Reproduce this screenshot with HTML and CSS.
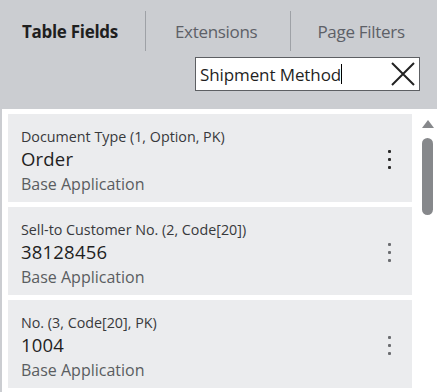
FILE: index.html
```html
<!DOCTYPE html>
<html lang="en">
<head>
  <meta charset="UTF-8" />
  <title>Table Fields</title>
  <link rel="stylesheet" href="styles.css">
</head>
<body>
  <div class="panel">
    <div class="header">
      <div class="tabs">
        <div class="tab active">Table Fields</div>
        <div class="sep first"></div>
        <div class="tab">Extensions</div>
        <div class="sep second"></div>
        <div class="tab">Page Filters</div>
      </div>
      <div class="search-row">
        <div class="search">
          <span class="search-text">Shipment Method</span><span class="caret"></span>
          <svg class="clear" width="26" height="26" viewBox="0 0 26 26">
            <path d="M2 2 L24 24 M24 2 L2 24" stroke="#222" stroke-width="2" fill="none"/>
          </svg>
        </div>
      </div>
    </div>

    <div class="list">
      <div class="cards">
        <div class="card">
          <div class="info">
            <div class="meta">Document Type (1, Option, PK)</div>
            <div class="value">Order</div>
            <div class="source">Base Application</div>
          </div>
          <div class="more dark"><i></i><i></i><i></i></div>
        </div>
        <div class="card">
          <div class="info">
            <div class="meta">Sell-to Customer No. (2, Code[20])</div>
            <div class="value">38128456</div>
            <div class="source">Base Application</div>
          </div>
          <div class="more"><i></i><i></i><i></i></div>
        </div>
        <div class="card">
          <div class="info">
            <div class="meta">No. (3, Code[20], PK)</div>
            <div class="value">1004</div>
            <div class="source">Base Application</div>
          </div>
          <div class="more"><i></i><i></i><i></i></div>
        </div>
      </div>
      <div class="scrollbar">
        <div class="arrow"></div>
        <div class="thumb"></div>
      </div>
    </div>
  </div>
</body>
</html>
```

FILE: styles.css
```css
body {
  margin: 0;
  padding: 0;
  font-family: 'Open Sans', 'Noto Sans', sans-serif;
  background: #cbcdd1;
  overflow: hidden;
}

.panel {
  width: 437px;
  height: 392px;
  display: flex;
  flex-direction: column;
}

.header {
  background: #cbcdd1;
  height: 109px;
  box-sizing: border-box;
}

.tabs {
  display: flex;
  align-items: center;
  height: 62px;
  padding-left: 22px;
}

.tab {
  font-size: 17px;
  color: #5d6067;
  letter-spacing: -0.3px;
}

.tab.active {
  color: #1f1f1f;
  font-weight: bold;
  letter-spacing: -0.3px;
}

.sep {
  width: 1px;
  height: 40px;
  background: #9ea1a6;
}

.sep.first {
  margin: 0 29px 0 27px;
}

.sep.second {
  margin: 0 26px 0 33px;
}

.search-row {
  display: flex;
  justify-content: flex-end;
  padding-right: 17px;
  margin-top: -5px;
}

.search {
  width: 225px;
  height: 34px;
  box-sizing: border-box;
  border: 1px solid #5d5f63;
  background: #fff;
  display: flex;
  align-items: center;
  padding-left: 4px;
}

.search-text {
  font-size: 17px;
  color: #1f1f1f;
  letter-spacing: -0.1px;
}

.caret {
  width: 1px;
  height: 20px;
  background: #000;
}

.clear {
  margin-left: auto;
  margin-right: 3px;
}

.list {
  flex: 1;
  display: flex;
  background: #fff;
  margin-left: 2px;
  overflow: hidden;
}

.cards {
  flex: 1;
  padding: 5px 6px 0 6px;
  display: flex;
  flex-direction: column;
  gap: 5px;
}

.card {
  background: #ebecee;
  height: 88px;
  display: flex;
  align-items: center;
  padding-left: 13px;
  padding-right: 21px;
  flex-shrink: 0;
}

.info {
  flex: 1;
  margin-top: 8px;
}

.meta {
  font-size: 14.3px;
  line-height: 18px;
  color: #38393c;
}

.value {
  font-size: 18.5px;
  line-height: 26px;
  color: #1f1f1f;
  letter-spacing: 0.2px;
}

.source {
  font-size: 16px;
  line-height: 24px;
  color: #5a5d61;
}

.more {
  display: flex;
  flex-direction: column;
  gap: 5px;
  margin-top: 2px;
}

.more i {
  width: 3px;
  height: 3px;
  border-radius: 1px;
  background: #6b6d70;
}

.more.dark i {
  background: #2b2b2b;
}

.scrollbar {
  width: 19px;
  display: flex;
  flex-direction: column;
  align-items: center;
  padding-top: 11px;
}

.arrow {
  width: 0;
  height: 0;
  border-left: 6px solid transparent;
  border-right: 6px solid transparent;
  border-bottom: 8px solid #86888b;
}

.thumb {
  width: 11px;
  height: 77px;
  background: #86888b;
  border-radius: 6px;
  margin-top: 10px;
}
```
